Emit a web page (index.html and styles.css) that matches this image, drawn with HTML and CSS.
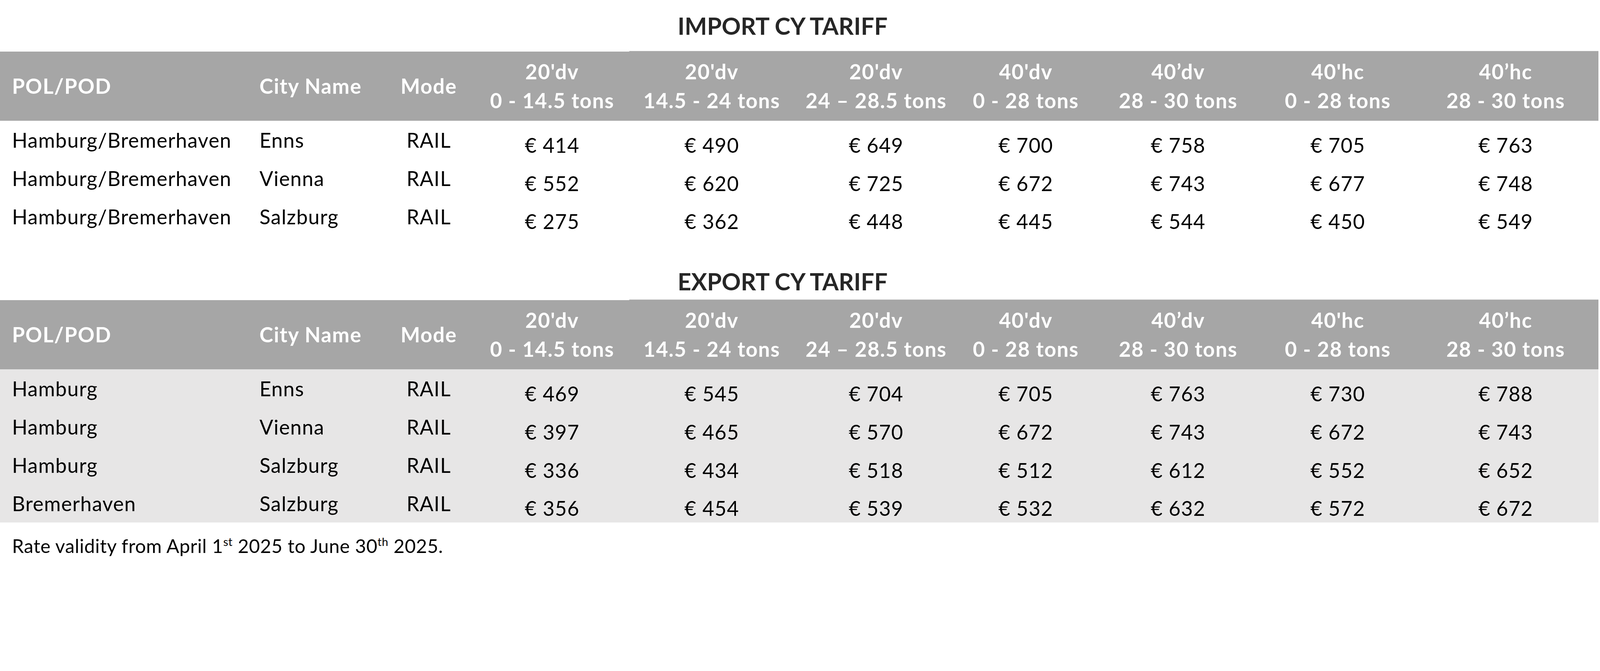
FILE: index.html
```html
<!DOCTYPE html>
<html lang="en">
<head>
<meta charset="utf-8">
<title>CY Tariff</title>
<link rel="stylesheet" href="styles.css">
</head>
<body>
<div class="page">
  <div class="title title-import">IMPORT CY TARIFF</div>
  <table class="tariff">
    <colgroup>
      <col class="w1"><col class="w2"><col class="w3"><col class="w4"><col class="w5">
      <col class="w6"><col class="w7"><col class="w8"><col class="w9"><col class="w10">
    </colgroup>
    <thead>
      <tr class="head">
        <th class="hl left">POL/POD</th>
        <th class="hl left">City Name</th>
        <th class="hl">Mode</th>
        <th class="hl">20'dv<br>0 - 14.5 tons</th>
        <th class="hr">20'dv<br>14.5 - 24 tons</th>
        <th class="hr">20'dv<br>24 – 28.5 tons</th>
        <th class="hr">40'dv<br>0 - 28 tons</th>
        <th class="hr">40’dv<br>28 - 30 tons</th>
        <th class="hr">40'hc<br>0 - 28 tons</th>
        <th class="hr">40’hc<br>28 - 30 tons</th>
      </tr>
    </thead>
    <tbody>
      <tr class="row"><td class="txt">Hamburg/Bremerhaven</td><td class="txt">Enns</td><td class="mode">RAIL</td><td class="num">€ 414</td><td class="num">€ 490</td><td class="num">€ 649</td><td class="num">€ 700</td><td class="num">€ 758</td><td class="num">€ 705</td><td class="num">€ 763</td></tr>
      <tr class="row"><td class="txt">Hamburg/Bremerhaven</td><td class="txt">Vienna</td><td class="mode">RAIL</td><td class="num">€ 552</td><td class="num">€ 620</td><td class="num">€ 725</td><td class="num">€ 672</td><td class="num">€ 743</td><td class="num">€ 677</td><td class="num">€ 748</td></tr>
      <tr class="row"><td class="txt">Hamburg/Bremerhaven</td><td class="txt">Salzburg</td><td class="mode">RAIL</td><td class="num">€ 275</td><td class="num">€ 362</td><td class="num">€ 448</td><td class="num">€ 445</td><td class="num">€ 544</td><td class="num">€ 450</td><td class="num">€ 549</td></tr>
    </tbody>
  </table>

  <div class="title title-export">EXPORT CY TARIFF</div>
  <table class="tariff">
    <colgroup>
      <col class="w1"><col class="w2"><col class="w3"><col class="w4"><col class="w5">
      <col class="w6"><col class="w7"><col class="w8"><col class="w9"><col class="w10">
    </colgroup>
    <thead>
      <tr class="head">
        <th class="hl left">POL/POD</th>
        <th class="hl left">City Name</th>
        <th class="hl">Mode</th>
        <th class="hl">20'dv<br>0 - 14.5 tons</th>
        <th class="hr">20'dv<br>14.5 - 24 tons</th>
        <th class="hr">20'dv<br>24 – 28.5 tons</th>
        <th class="hr">40'dv<br>0 - 28 tons</th>
        <th class="hr">40’dv<br>28 - 30 tons</th>
        <th class="hr">40'hc<br>0 - 28 tons</th>
        <th class="hr">40’hc<br>28 - 30 tons</th>
      </tr>
    </thead>
    <tbody class="shaded">
      <tr class="row"><td class="txt">Hamburg</td><td class="txt">Enns</td><td class="mode">RAIL</td><td class="num">€ 469</td><td class="num">€ 545</td><td class="num">€ 704</td><td class="num">€ 705</td><td class="num">€ 763</td><td class="num">€ 730</td><td class="num">€ 788</td></tr>
      <tr class="row"><td class="txt">Hamburg</td><td class="txt">Vienna</td><td class="mode">RAIL</td><td class="num">€ 397</td><td class="num">€ 465</td><td class="num">€ 570</td><td class="num">€ 672</td><td class="num">€ 743</td><td class="num">€ 672</td><td class="num">€ 743</td></tr>
      <tr class="row"><td class="txt">Hamburg</td><td class="txt">Salzburg</td><td class="mode">RAIL</td><td class="num">€ 336</td><td class="num">€ 434</td><td class="num">€ 518</td><td class="num">€ 512</td><td class="num">€ 612</td><td class="num">€ 552</td><td class="num">€ 652</td></tr>
      <tr class="row"><td class="txt">Bremerhaven</td><td class="txt">Salzburg</td><td class="mode">RAIL</td><td class="num">€ 356</td><td class="num">€ 454</td><td class="num">€ 539</td><td class="num">€ 532</td><td class="num">€ 632</td><td class="num">€ 572</td><td class="num">€ 672</td></tr>
    </tbody>
  </table>

  <p class="note">Rate validity from April 1<span class="sup">st</span> 2025 to June 30<span class="sup">th</span> 2025.</p>
</div>
</body>
</html>
```

FILE: styles.css
```css
html, body {
  margin: 0;
  padding: 0;
  background: #ffffff;
}

body {
  font-family: Lato, "Open Sans", "Liberation Sans", sans-serif;
  color: #000000;
}

.page {
  width: 4096px;
}

.title {
  width: 4092px;
  box-sizing: border-box;
  padding-right: 85px;
  text-align: center;
  font-weight: 700;
  font-size: 60.5px;
  line-height: 72.4px;
  color: #262626;
}

.title-import {
  padding-top: 29.8px;
  padding-bottom: 27.3px;
}

.title-export {
  padding-top: 80.9px;
  padding-bottom: 9.4px;
}

.tariff {
  width: 4092px;
  table-layout: fixed;
  border-collapse: separate;
  border-spacing: 0;
}

.w1 { width: 633.6px; }
.w2 { width: 345.7px; }
.w3 { width: 236.7px; }
.w4 { width: 395.1px; }
.w5 { width: 422.4px; }
.w6 { width: 419px; }
.w7 { width: 347.4px; }
.w8 { width: 432.6px; }
.w9 { width: 384.9px; }
.w10 { width: 474.6px; }

.head {
  height: 179.7px;
}

.head th {
  padding: 0;
  background: #a6a6a6;
  color: #ffffff;
  font-weight: 700;
  font-size: 52.8px;
  line-height: 74.1px;
  letter-spacing: 1.7px;
  text-align: center;
  vertical-align: middle;
  white-space: nowrap;
}

.head th.left {
  text-align: left;
  padding-left: 30.7px;
}

.head th.hl {
  border-top: 2.5px solid #ffffff;
}

.head th.hr {
  border-top: 1px solid #dcdcdc;
}

.row {
  height: 97.9px;
}

.row td {
  padding: 0;
  vertical-align: top;
  font-size: 51.9px;
  line-height: 61.3px;
  letter-spacing: 1.28px;
  white-space: nowrap;
  color: #000000;
}

.row td.txt {
  padding-top: 18.7px;
  padding-left: 30.7px;
  text-align: left;
}

.row td.mode {
  padding-top: 18.7px;
  text-align: center;
}

.row td.num {
  padding-top: 31.5px;
  text-align: center;
}

.shaded td {
  background: #e7e6e6;
}

.note {
  margin: 31.5px 0 0 0;
  padding-left: 30.7px;
  font-size: 48.5px;
  line-height: 56.2px;
  letter-spacing: 0.6px;
  color: #000000;
}

.sup {
  font-size: 0.6em;
  line-height: 0;
  vertical-align: 0.62em;
}
```
